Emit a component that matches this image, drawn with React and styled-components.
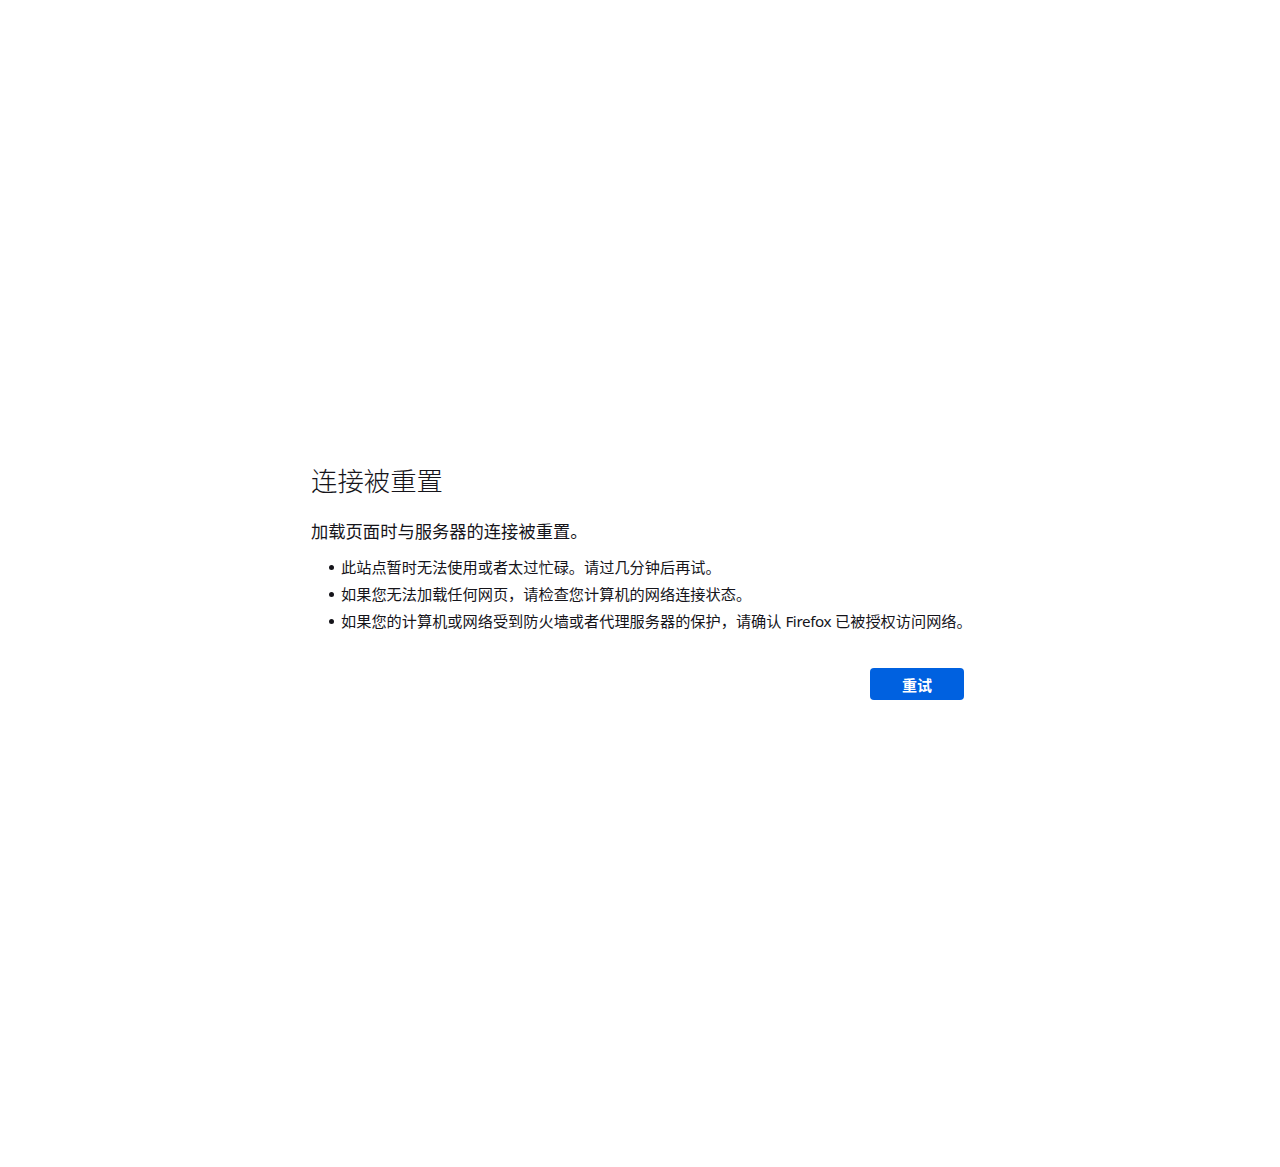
import React from 'react';
import styled, { createGlobalStyle } from 'styled-components';

const GlobalStyle = createGlobalStyle`
  html, body {
    margin: 0;
    padding: 0;
    background: #ffffff;
  }
  body {
    font-family: "Noto Sans", "Noto Sans CJK SC", sans-serif;
    color: #15141a;
  }
`;

const Page = styled.div`
  min-height: 1167px;
  display: flex;
  align-items: center;
  justify-content: center;
  padding: 0 5px 2px 0;
  box-sizing: border-box;
`;

const Container = styled.div`
  width: 653px;
  display: flex;
  flex-direction: column;
`;

const Title = styled.h1`
  margin: 0;
  font-size: 26.4px;
  font-weight: 300;
  line-height: 30px;
  color: #15141a;
  font-family: "Noto Sans CJK SC", sans-serif;
`;

const ShortDesc = styled.p`
  margin: 24px 0 0 0;
  font-size: 17.3px;
  line-height: 24px;
  font-family: "Noto Sans CJK SC", sans-serif;
`;

const List = styled.ul`
  margin: 11px 0 0 0;
  padding: 0 0 0 18px;
  list-style: none;
  font-size: 15.2px;
  line-height: 27px;
  font-family: "Noto Sans", "Noto Sans CJK SC", sans-serif;
`;

const Item = styled.li`
  display: flex;
  align-items: center;
  white-space: nowrap;

  &::before {
    content: "";
    width: 5px;
    height: 5px;
    border-radius: 50%;
    background: #15141a;
    margin-right: 7px;
    flex: none;
  }
`;

const ItemText = styled.span`
  white-space: nowrap;
`;

const Brand = styled.span`
  letter-spacing: -0.4px;
`;

const Actions = styled.div`
  display: flex;
  justify-content: flex-end;
  margin-top: 33px;
`;

const RetryButton = styled.button`
  width: 94px;
  height: 32px;
  border: none;
  border-radius: 4px;
  background: #0061e0;
  color: #ffffff;
  font-weight: 700;
  font-size: 15px;
  font-family: "Noto Sans CJK SC", sans-serif;
  cursor: pointer;
`;

export default function App() {
  return (
    <>
      <GlobalStyle />
      <Page>
        <Container>
          <Title>连接被重置</Title>
          <ShortDesc>加载页面时与服务器的连接被重置。</ShortDesc>
          <List>
            <Item><ItemText>此站点暂时无法使用或者太过忙碌。请过几分钟后再试。</ItemText></Item>
            <Item><ItemText>如果您无法加载任何网页，请检查您计算机的网络连接状态。</ItemText></Item>
            <Item>
              <ItemText>如果您的计算机或网络受到防火墙或者代理服务器的保护，请确认 <Brand>Firefox</Brand> 已被授权访问网络。</ItemText>
            </Item>
          </List>
          <Actions>
            <RetryButton>重试</RetryButton>
          </Actions>
        </Container>
      </Page>
    </>
  );
}
